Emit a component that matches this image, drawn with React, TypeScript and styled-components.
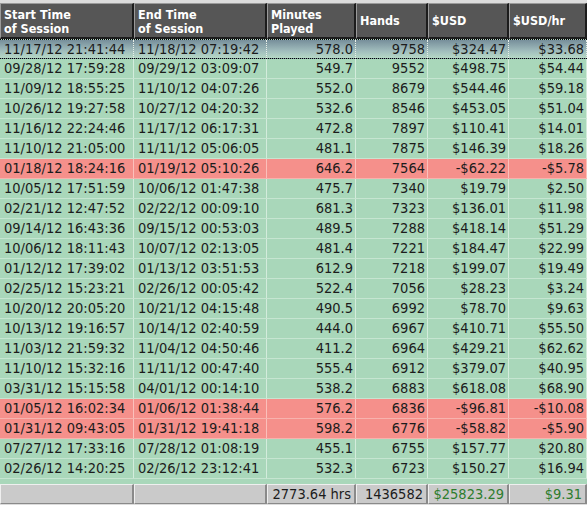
import React from "react";
import styled, { createGlobalStyle, css } from "styled-components";

const Global = createGlobalStyle`
  html, body { margin: 0; padding: 0; background: #dcdcdc; }
  body { font-family: "DejaVu Sans Condensed", "DejaVu Sans", Verdana, sans-serif; }
`;

const COLS = "134px 133px 89px 72px 81px 78px";

type Kind = "normal" | "loss" | "selected";

const rows: [string, string, string, string, string, string, Kind][] = [
  ["11/17/12 21:41:44", "11/18/12 07:19:42", "578.0", "9758", "$324.47", "$33.68", "selected"],
  ["09/28/12 17:59:28", "09/29/12 03:09:07", "549.7", "9552", "$498.75", "$54.44", "normal"],
  ["11/09/12 18:55:25", "11/10/12 04:07:26", "552.0", "8679", "$544.46", "$59.18", "normal"],
  ["10/26/12 19:27:58", "10/27/12 04:20:32", "532.6", "8546", "$453.05", "$51.04", "normal"],
  ["11/16/12 22:24:46", "11/17/12 06:17:31", "472.8", "7897", "$110.41", "$14.01", "normal"],
  ["11/10/12 21:05:00", "11/11/12 05:06:05", "481.1", "7875", "$146.39", "$18.26", "normal"],
  ["01/18/12 18:24:16", "01/19/12 05:10:26", "646.2", "7564", "-$62.22", "-$5.78", "loss"],
  ["10/05/12 17:51:59", "10/06/12 01:47:38", "475.7", "7340", "$19.79", "$2.50", "normal"],
  ["02/21/12 12:47:52", "02/22/12 00:09:10", "681.3", "7323", "$136.01", "$11.98", "normal"],
  ["09/14/12 16:43:36", "09/15/12 00:53:03", "489.5", "7288", "$418.14", "$51.29", "normal"],
  ["10/06/12 18:11:43", "10/07/12 02:13:05", "481.4", "7221", "$184.47", "$22.99", "normal"],
  ["01/12/12 17:39:02", "01/13/12 03:51:53", "612.9", "7218", "$199.07", "$19.49", "normal"],
  ["02/25/12 15:23:21", "02/26/12 00:05:42", "522.4", "7056", "$28.23", "$3.24", "normal"],
  ["10/20/12 20:05:20", "10/21/12 04:15:48", "490.5", "6992", "$78.70", "$9.63", "normal"],
  ["10/13/12 19:16:57", "10/14/12 02:40:59", "444.0", "6967", "$410.71", "$55.50", "normal"],
  ["11/03/12 21:59:32", "11/04/12 04:50:46", "411.2", "6964", "$429.21", "$62.62", "normal"],
  ["11/10/12 15:32:16", "11/11/12 00:47:40", "555.4", "6912", "$379.07", "$40.95", "normal"],
  ["03/31/12 15:15:58", "04/01/12 00:14:10", "538.2", "6883", "$618.08", "$68.90", "normal"],
  ["01/05/12 16:02:34", "01/06/12 01:38:44", "576.2", "6836", "-$96.81", "-$10.08", "loss"],
  ["01/31/12 09:43:05", "01/31/12 19:41:18", "598.2", "6776", "-$58.82", "-$5.90", "loss"],
  ["07/27/12 17:33:16", "07/28/12 01:08:19", "455.1", "6755", "$157.77", "$20.80", "normal"],
  ["02/26/12 14:20:25", "02/26/12 23:12:41", "532.3", "6723", "$150.27", "$16.94", "normal"],
];

const Frame = styled.div`
  width: 587px;
  height: 505px;
  box-sizing: border-box;
  padding-top: 3px;
  background: #dcdcdc;
  display: flex;
  flex-direction: column;
  font-size: 14.5px;
  overflow: hidden;
`;

const HeaderRow = styled.div`
  display: grid;
  grid-template-columns: ${COLS};
  height: 36px;
`;

const HeadCell = styled.div<{ $center?: boolean }>`
  box-sizing: border-box;
  background: #565656;
  border-top: 1px solid #9a9a9a;
  border-left: 1px solid #9a9a9a;
  border-right: 2px solid #1c1c1c;
  border-bottom: 2px solid #1c1c1c;
  color: #ffffff;
  font-size: 12.5px;
  font-weight: bold;
  line-height: 14px;
  padding: 4px 3px 0 3px;
  display: flex;
  flex-direction: column;
  justify-content: ${(p) => (p.$center ? "center" : "flex-start")};
  padding-bottom: ${(p) => (p.$center ? "4px" : "0")};
`;

const Body = styled.div`
  flex: 1;
  background: #a9d7ba;
  display: flex;
  flex-direction: column;
`;

const kindBg: Record<Kind, ReturnType<typeof css>> = {
  normal: css`background: #a9d7ba;`,
  loss: css`background: #f5908b;`,
  selected: css`background: linear-gradient(to bottom, #768e9a 0%, #a0bcbc 60%, #b6d8c6 100%);`,
};

const Row = styled.div<{ $kind: Kind }>`
  display: grid;
  grid-template-columns: ${COLS};
  height: 20px;
  box-sizing: border-box;
  ${(p) => kindBg[p.$kind]}
  border-bottom: 1px solid ${(p) => (p.$kind === "loss" ? "#f7b3ae" : "#c6e5d1")};
  ${(p) =>
    p.$kind === "selected" &&
    css`
      border-top: 1px dotted #000;
      border-bottom: 1px dotted #000;
    `}
`;

const Cell = styled.div<{ $right?: boolean; $kind: Kind }>`
  box-sizing: border-box;
  color: #1c1c1c;
  line-height: 18px;
  white-space: nowrap;
  padding: 0 2px 0 4px;
  text-align: ${(p) => (p.$right ? "right" : "left")};
  border-right: 1px ${(p) => (p.$kind === "selected" ? "dotted" : "solid")}
    ${(p) => (p.$kind === "loss" ? "#fbc0bb" : p.$kind === "selected" ? "#e8efe8" : "#d3ecdc")};
`;

const FooterRow = styled.div`
  display: grid;
  grid-template-columns: ${COLS};
  height: 20px;
  margin-bottom: 1px;
`;

const FootCell = styled.div<{ $green?: boolean }>`
  box-sizing: border-box;
  background: #cacaca;
  border-top: 1px solid #efefef;
  border-left: 1px solid #efefef;
  border-right: 2px solid #8a8a8a;
  border-bottom: 1px solid #8a8a8a;
  color: ${(p) => (p.$green ? "#2e7d2e" : "#1c1c1c")};
  text-align: right;
  padding: 0 3px 0 3px;
  line-height: 18px;
  white-space: nowrap;
`;

const headers: { lines: string[] }[] = [
  { lines: ["Start Time", "of Session"] },
  { lines: ["End Time", "of Session"] },
  { lines: ["Minutes", "Played"] },
  { lines: ["Hands"] },
  { lines: ["$USD"] },
  { lines: ["$USD/hr"] },
];

export default function App() {
  return (
    <>
      <Global />
      <Frame>
        <HeaderRow>
          {headers.map((h, i) => (
            <HeadCell key={i} $center={h.lines.length === 1}>
              {h.lines.map((l) => (
                <span key={l}>{l}</span>
              ))}
            </HeadCell>
          ))}
        </HeaderRow>
        <Body>
          {rows.map((r, i) => {
            const kind = r[6];
            return (
              <Row key={i} $kind={kind}>
                {r.slice(0, 6).map((v, j) => (
                  <Cell key={j} $kind={kind} $right={j >= 2}>
                    {v}
                  </Cell>
                ))}
              </Row>
            );
          })}
        </Body>
        <FooterRow>
          <FootCell />
          <FootCell />
          <FootCell>2773.64 hrs</FootCell>
          <FootCell>1436582</FootCell>
          <FootCell $green>$25823.29</FootCell>
          <FootCell $green>$9.31</FootCell>
        </FooterRow>
      </Frame>
    </>
  );
}
